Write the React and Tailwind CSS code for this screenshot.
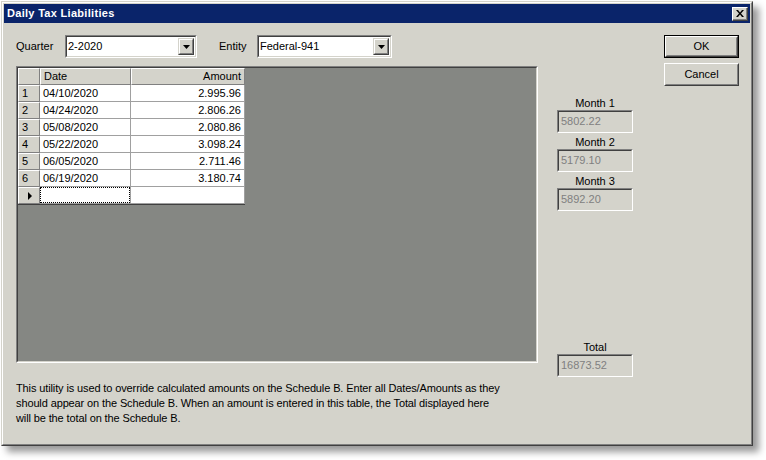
import React from "react";

const FONT = { fontFamily: '"Liberation Sans", Arial, sans-serif' };

const rows = [
  ["1", "04/10/2020", "2.995.96"],
  ["2", "04/24/2020", "2.806.26"],
  ["3", "05/08/2020", "2.080.86"],
  ["4", "05/22/2020", "3.098.24"],
  ["5", "06/05/2020", "2.711.46"],
  ["6", "06/19/2020", "3.180.74"],
];

function DownArrow() {
  return (
    <svg width="7" height="4" viewBox="0 0 7 4">
      <path d="M0 0h7L3.5 4z" fill="#000" />
    </svg>
  );
}

function Combo({ value, width }) {
  return (
    <div
      className="h-[23px] border border-t-[#808080] border-l-[#808080] border-b-white border-r-white"
      style={{ width }}
    >
      <div className="flex h-full border border-t-[#404040] border-l-[#404040] border-b-[#d4d3cb] border-r-[#d4d3cb] bg-white">
        <div className="flex flex-1 items-center pl-[1px] text-[11px] text-black">{value}</div>
        <div className="m-[1px] w-[16px] border border-t-[#d4d3cb] border-l-[#d4d3cb] border-b-[#404040] border-r-[#404040]">
          <div className="flex h-full items-center justify-center border border-t-white border-l-white border-b-[#808080] border-r-[#808080] bg-[#d4d3cb]">
            <DownArrow />
          </div>
        </div>
      </div>
    </div>
  );
}

function Button({ label, isDefault }) {
  const inner = (
    <div className="h-full border border-t-white border-l-white border-b-[#404040] border-r-[#404040]">
      <div className="flex h-full items-center justify-center border border-t-[#d4d3cb] border-l-[#d4d3cb] border-b-[#808080] border-r-[#808080] bg-[#d4d3cb] text-[11px] text-black">
        {label}
      </div>
    </div>
  );
  return (
    <div className={`h-[23px] w-[75px] ${isDefault ? "border border-black" : ""}`}>{inner}</div>
  );
}

function ReadOnlyField({ label, value }) {
  return (
    <div className="flex flex-col items-center">
      <div className="h-[13px] text-[11px] leading-[13px] text-black">{label}</div>
      <div className="h-[23px] w-[76px] border border-t-[#808080] border-l-[#808080] border-b-white border-r-white">
        <div className="flex h-full items-center border border-t-[#404040] border-l-[#404040] border-b-[#d4d3cb] border-r-[#d4d3cb] pl-[2px] text-[11px] text-[#808080]">
          {value}
        </div>
      </div>
    </div>
  );
}

function HeaderCell({ children, align = "left" }) {
  return (
    <div
      className={`flex h-[17px] items-center border-t border-l border-t-white border-l-white border-b border-r border-b-[#808080] border-r-[#808080] bg-[#d4d3cb] px-[3px] text-[11px] text-black ${
        align === "right" ? "justify-end" : "justify-start"
      }`}
    >
      {children}
    </div>
  );
}

function DataCell({ children, align = "left", focus }) {
  return (
    <div className="h-[17px] border-b border-r border-b-[#a0a0a0] border-r-[#a0a0a0] bg-white">
      <div
        className={`flex h-full items-center px-[3px] text-[11px] text-black ${
          align === "right" ? "justify-end" : "justify-start"
        } ${focus ? "border border-dotted border-black" : ""}`}
      >
        {children}
      </div>
    </div>
  );
}

function Grid() {
  return (
    <div className="grid w-[227px] grid-cols-[22px_91px_114px] border-r border-b border-r-[#404040] border-b-[#404040]">
      <HeaderCell />
      <HeaderCell>Date</HeaderCell>
      <HeaderCell align="right">Amount</HeaderCell>
      {rows.map(([n, d, a]) => (
        <React.Fragment key={n}>
          <HeaderCell>{n}</HeaderCell>
          <DataCell>{d}</DataCell>
          <DataCell align="right">{a}</DataCell>
        </React.Fragment>
      ))}
      <HeaderCell>
        <div className="flex w-full justify-center pl-[2px]">
          <svg width="4" height="8" viewBox="0 0 4 8">
            <path d="M0 0v8l4-4z" fill="#000" />
          </svg>
        </div>
      </HeaderCell>
      <DataCell focus />
      <DataCell />
    </div>
  );
}

export default function App() {
  return (
    <div className="min-h-[460px] w-[766px] bg-white pl-[1px] pt-[1px]" style={FONT}>
      <div className="h-[445px] w-[752px] border border-t-[#d4d3cb] border-l-[#d4d3cb] border-b-[#404040] border-r-[#404040] shadow-[6px_6px_7px_rgba(0,0,0,0.4)]">
        <div className="flex h-full flex-col border border-t-white border-l-white border-b-[#808080] border-r-[#808080] bg-[#d4d3cb] p-[1px]">
          {/* title bar */}
          <div className="flex h-[19px] items-center justify-between bg-[#0a246a] pl-[3px] pr-[2px]">
            <span className="text-[11px] font-bold tracking-[0.3px] text-white">Daily Tax Liabilities</span>
            <div className="h-[14px] w-[16px] border border-t-white border-l-white border-b-[#404040] border-r-[#404040]">
              <div className="flex h-full items-center justify-center border-b border-r border-b-[#808080] border-r-[#808080] bg-[#d4d3cb]">
                <svg width="8" height="7" viewBox="0 0 8 7">
                  <path d="M0 0h2l2 2.5L6 0h2L5 3.5 8 7H6L4 4.5 2 7H0l3-3.5z" fill="#000" />
                </svg>
              </div>
            </div>
          </div>

          {/* client area */}
          <div className="flex flex-1 items-start pl-[12px] pt-[12px]">
            <div className="flex w-[522px] flex-col">
              <div className="flex h-[23px] items-center">
                <span className="w-[49px] text-[11px] text-black">Quarter</span>
                <Combo value="2-2020" width={132} />
                <span className="ml-[22px] w-[38px] text-[11px] text-black">Entity</span>
                <Combo value="Federal-941" width={135} />
              </div>
              <div className="mt-[8px] h-[297px] border border-t-[#808080] border-l-[#808080] border-b-white border-r-white">
                <div className="h-full border border-t-[#404040] border-l-[#404040] border-b-[#d4d3cb] border-r-[#d4d3cb] bg-[#858783]">
                  <Grid />
                </div>
              </div>
              <p className="mt-[18px] whitespace-nowrap text-[11px] leading-[15px] tracking-[-0.12px] text-black">
                This utility is used to override calculated amounts on the Schedule B. Enter all Dates/Amounts as they
                <br />
                should appear on the Schedule B. When an amount is entered in this table, the Total displayed here
                <br />
                will be the total on the Schedule B.
              </p>
            </div>

            <div className="ml-[19px] mt-[62px] flex flex-col">
              <ReadOnlyField label="Month 1" value="5802.22" />
              <div className="mt-[3px]">
                <ReadOnlyField label="Month 2" value="5179.10" />
              </div>
              <div className="mt-[3px]">
                <ReadOnlyField label="Month 3" value="5892.20" />
              </div>
              <div className="mt-[130px]">
                <ReadOnlyField label="Total" value="16873.52" />
              </div>
            </div>

            <div className="ml-[31px] flex flex-col gap-[5px]">
              <Button label="OK" isDefault />
              <Button label="Cancel" />
            </div>
          </div>
        </div>
      </div>
    </div>
  );
}
